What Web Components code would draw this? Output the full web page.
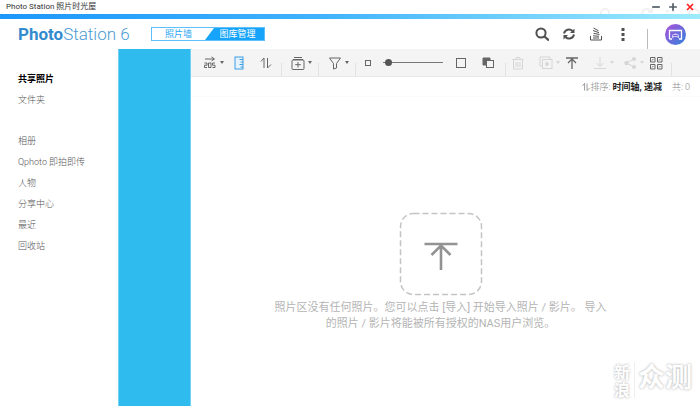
<!DOCTYPE html>
<html lang="zh-CN">
<head>
<meta charset="utf-8">
<title>Photo Station</title>
<style>
    body {
        margin: 0;
        background: #fff;
        color: #555;
        font-family: Roboto, "Noto Sans CJK SC", sans-serif;
        font-size: 9px;
    }
</style>
</head>
<body>
<photo-app></photo-app>

<script>
const icons = {
    search: `<circle cx="6" cy="6" r="4.6"/><path d="M9.5 9.5L14 13.5" stroke-width="2.2"/>`,
    refresh: `<path d="M2 6.5A5 5 0 0 1 10.5 4M12 7.5A5 5 0 0 1 3.500 10"/><path d="M12.500 1.500V6H8zM1.500 12.500V8H6z" fill="currentColor" stroke="none"/>`,
    tasks: `<path d="M1.500 9v4h11V9M4 11h6M4 8.800l6 .5M4.500 6.300l6 1.200M4 3.500l6 2.200M4.500 1l5 2.800"/>`,
    dots: `<path d="M5.500 1h3v3h-3zM5.500 6h3v3h-3zM5.500 11h3v3h-3z" fill="currentColor" stroke="none"/>`,
    timeline: `<path d="M2 3h9M8.500 1L11.500 3 8.500 5" /><path d="M1.500 7h2.500v2.200H1.500v2.300H4M5.500 7h2.500v4.500H5.500zM12 7H9.500v2.200H12v2.300H9.500"/>`,
    ruler: `<rect x="3" y="1" width="8" height="12" fill="#e6f3fc"/><path d="M11 3.500H7.500M11 6H8.500M11 8.500H7.500M11 11H8.500"/>`,
    sort: `<path d="M2 5.500L5 2v10M8.500 2v10l3.500-3.500"/>`,
    album: `<path d="M3 1.500h8M2 3.500h10"/><rect x="1" y="4" width="12" height="9.500" rx="1"/><path d="M7 6v5.500M4.200 8.700h5.600"/>`,
    filter: `<path d="M1.500 2h11L8.500 7.500v4.500l-3 1V7.500z"/>`,
    small: `<rect x="4.500" y="4.500" width="5" height="5"/>`,
    large: `<rect x="2.500" y="2.500" width="9" height="9"/>`,
    select: `<path d="M2 2h7v7H2z" fill="currentColor"/><rect x="5.500" y="4.500" width="7" height="7" fill="#f4f4f4"/>`,
    trash: `<path d="M1.500 3.500h11M5 3V1.500h4V3M2.500 4v9h9V4M5 6v5M7 6v5M9 6v5"/>`,
    copy: `<path d="M3 10H1V1h10v2"/><rect x="3.500" y="3.500" width="9.500" height="9"/><path d="M7 6v4l3-2z" fill="currentColor"/>`,
    upload: `<path d="M1 2h12M7 13V3M3 7l4-4 4 4" stroke-width="1.300"/>`,
    download: `<path d="M1 12.500h12M7 1v9M3.500 7L7 10.500 10.500 7"/>`,
    share: `<path d="M11 3L3.500 7l7.500 4"/><circle cx="3.500" cy="7" r="2.200" fill="currentColor" stroke="none"/><circle cx="11" cy="3" r="2" fill="currentColor" stroke="none"/><circle cx="11" cy="11" r="2" fill="currentColor" stroke="none"/>`,
    qr: `<path d="M1.500 1.500h4.500v4.500H1.500zM8.500 1.500H13v4.500H8.500zM1.500 8.500h4.500V13H1.500zM8.500 8.500H13V13H8.500zM3 4.500L4.500 3M10 4.500L11.500 3M3 11.500l1.500-1.500M10 11.500l1.500-1.500"/>`,
    minus: `<path d="M2.500 7h9"/>`,
    plus: `<path d="M2.500 7h9M7 2.500v9"/>`,
    close: `<path d="M3.500 3.500l7 7M10.500 3.500l-7 7"/>`
};

/* <icon-button icon label menu disabled> */
class IconButton extends HTMLElement {
    constructor() {
        super();
        this.attachShadow({mode: "open"});
    }

    connectedCallback() {
        this.shadowRoot.innerHTML = `
        <style>
        :host { display: block; flex: none; width: 24px; color: #666; }
        :host([menu]) { width: 30px; }
        :host([disabled]) { color: #d6d6d6; }
        button {
            display: flex;
            align-items: center;
            justify-content: center;
            gap: 3px;
            width: 100%;
            padding: 0;
            border: 0;
            background: none;
            color: inherit;
        }
        :host([menu]) button { justify-content: flex-end; }
        svg {
            flex: none;
            width: var(--icon-size, 14px);
            height: var(--icon-size, 14px);
            fill: none;
            stroke: currentColor;
            stroke-width: var(--icon-stroke, 1);
        }
        .caret { border: 2px solid transparent; border-top: 3px solid currentColor; border-bottom: 0; }
        </style>
        <button type="button" aria-label="${this.getAttribute("label")}" ${this.hasAttribute("disabled") ? "disabled" : ""}>
            <svg viewBox="0 0 14 14">${icons[this.getAttribute("icon")]}</svg>
            ${this.hasAttribute("menu") ? `<span class="caret"></span>` : ""}
        </button>
        `;
    }
}

/* Window title with the minimise, maximise and close controls */
class TitleBar extends HTMLElement {
    constructor() {
        super();
        this.attachShadow({mode: "open"});
        this.shadowRoot.innerHTML = `
        <style>
        :host {
            display: flex;
            align-items: center;
            height: 14px;
            padding: 0 2px 0 6px;
            border-bottom: 5px solid;
            border-image: linear-gradient(90deg, #1c97fb, #3fb2fd 45%, #9eebfc) 1;
            color: #333;
            font-size: 8px;
            line-height: 12px;
        }
        .name { flex: 1; }
        .ghost { width: 100px; height: 14px; margin-right: -53px; fill: none; stroke: #f1f1f1; stroke-width: 2; }
        icon-button { --icon-size: 12px; --icon-stroke: 2; width: 17px; color: #555e68; z-index: 1; }
        .close { color: #f22; }
        </style>
        <span class="name">Photo Station 照片时光屋</span>
        <svg class="ghost" viewBox="0 0 100 14"><circle cx="5" cy="13" r="4"/><path d="M42 14a5 5 0 0 1 9-3M52 8v4h-4M66 11h3M72 11h3"/><circle cx="94" cy="14" r="5"/></svg>
        <icon-button icon="minus" label="最小化"></icon-button>
        <icon-button icon="plus" label="最大化"></icon-button>
        <icon-button class="close" icon="close" label="关闭"></icon-button>
        `;
    }
}

class AppHeader extends HTMLElement {
    constructor() {
        super();
        this.attachShadow({mode: "open"});
        this.shadowRoot.innerHTML = `
        <style>
        :host {
            display: flex;
            align-items: center;
            height: 30px;
            padding: 0 14px 0 18px;
        }
        h1 {
            margin: 0;
            width: 133px;
            color: #4b9ad3;
            font-size: 17px;
            font-weight: 300;
            line-height: 30px;
            white-space: nowrap;
        }
        h1 b { color: #338bcd; font-weight: 700; }
        nav {
            display: flex;
            box-sizing: border-box;
            height: 14px;
            width: 114px;
            border: 1px solid #5cc0fb;
            line-height: 12px;
            text-align: center;
        }
        nav a { flex: 1; color: #27a5f5; text-decoration: none; }
        nav .active {
            padding-left: 6px;
            background: #16a4fb;
            color: #fff;
            clip-path: polygon(9px 0, 100% 0, 100% 100%, 0 100%);
        }
        .tools { display: flex; gap: 3px; margin-left: auto; }
        .tools icon-button { --icon-stroke: 2; color: #505050; }
        .tools .thin { --icon-stroke: 1; }
        .divider { align-self: flex-end; width: 1px; height: 20px; margin: 0 17px 0 12px; background: #bbb; }
        .user { padding: 0; border: 0; background: none; display: flex; }
        .user svg { width: 21px; height: 21px; }
        </style>
        <h1><b>Photo</b>Station 6</h1>
        <nav>
            <a href="#wall">照片墙</a>
            <a href="#library" class="active">图库管理</a>
        </nav>
        <div class="tools">
            <icon-button icon="search" label="搜索"></icon-button>
            <icon-button icon="refresh" label="刷新"></icon-button>
            <icon-button class="thin" icon="tasks" label="后台任务"></icon-button>
            <icon-button icon="dots" label="更多"></icon-button>
        </div>
        <span class="divider"></span>
        <button class="user" type="button" aria-label="用户">
            <svg viewBox="0 0 21 21">
                <defs><linearGradient id="g" x1="0" y1="0" x2="1" y2="1"><stop offset=".1" stop-color="#a455d8"/><stop offset="1" stop-color="#2e83dc"/></linearGradient></defs>
                <circle cx="10.500" cy="10.500" r="10.500" fill="url(#g)"/>
                <path d="M4.500 15V6.500h12V15h-2.500M4.500 15H7" fill="none" stroke="#fff" stroke-width="1.300"/>
                <path d="M7 14.500v-3.500q3.500-3 7 0v3.500l-2-1.500h-3z" fill="#d3c8f7"/>
                <path d="M8 11.500h5" stroke="#7067d8"/>
            </svg>
        </button>
        `;
    }
}

class SideMenu extends HTMLElement {
    constructor() {
        super();
        this.attachShadow({mode: "open"});
        this.shadowRoot.innerHTML = `
        <style>
        :host { display: block; flex: none; width: 100px; padding: 20px 0 0 18px; }
        ul { margin: 0 0 20px; padding: 0; list-style: none; line-height: 21px; }
        a { color: #555; font-weight: 300; text-decoration: none; }
        .current { color: #000; font-weight: 700; }
        </style>
        <ul>
            <li><a class="current" href="#shared">共享照片</a></li>
            <li><a href="#folders">文件夹</a></li>
        </ul>
        <ul>
            <li><a href="#albums">相册</a></li>
            <li><a href="#qphoto">Qphoto 即拍即传</a></li>
            <li><a href="#people">人物</a></li>
            <li><a href="#sharing">分享中心</a></li>
            <li><a href="#recent">最近</a></li>
            <li><a href="#recycle">回收站</a></li>
        </ul>
        `;
    }
}

class PhotoToolbar extends HTMLElement {
    constructor() {
        super();
        this.attachShadow({mode: "open"});
        this.shadowRoot.innerHTML = `
        <style>
        :host {
            display: flex;
            height: 27px;
            padding-left: 3px;
            border-bottom: 1px solid #e9e9e9;
            background: #f4f4f4;
        }
        .group {
            display: flex;
            align-items: center;
            gap: 3px;
            padding-right: 4px;
            background: linear-gradient(#e2e2e2, #e2e2e2) right bottom / 1px 13px no-repeat;
        }
        .single { padding-right: 7px; }
        .sizes { padding-right: 6px; }
        .packed { gap: 0; }
        .blue { color: #3c9ee5; }
        input {
            appearance: none;
            width: 60px;
            height: 8px;
            margin: 0 3px 0 0;
            background: linear-gradient(#777, #777) center / 100% 1px no-repeat;
        }
        input::-webkit-slider-thumb {
            appearance: none;
            width: 7px;
            height: 7px;
            border-radius: 50%;
            background: #555;
        }
        </style>
        <div class="group">
            <icon-button icon="timeline" label="时间轴" menu></icon-button>
            <icon-button class="blue" icon="ruler" label="标尺"></icon-button>
            <icon-button icon="sort" label="排序"></icon-button>
        </div>
        <div class="group single"><icon-button icon="album" label="新建相册" menu></icon-button></div>
        <div class="group single"><icon-button icon="filter" label="筛选" menu></icon-button></div>
        <div class="group sizes">
            <icon-button icon="small" label="缩小"></icon-button>
            <input type="range" min="0" max="100" value="4" aria-label="缩略图大小">
            <icon-button icon="large" label="放大"></icon-button>
            <icon-button icon="select" label="选择"></icon-button>
        </div>
        <div class="group packed">
            <icon-button icon="trash" label="删除" disabled></icon-button>
            <icon-button icon="copy" label="复制" menu disabled></icon-button>
            <icon-button icon="upload" label="导入"></icon-button>
            <icon-button icon="download" label="下载" menu disabled></icon-button>
            <icon-button icon="share" label="分享" menu disabled></icon-button>
            <icon-button icon="qr" label="二维码"></icon-button>
        </div>
        `;
    }
}

/* Current sort order and the number of photos */
class SortStatus extends HTMLElement {
    constructor() {
        super();
        this.attachShadow({mode: "open"});
        this.shadowRoot.innerHTML = `
        <style>
        :host {
            display: flex;
            justify-content: flex-end;
            align-items: center;
            height: 19px;
            padding-right: 10px;
            border-bottom: 1px solid #fafafa;
            color: #888;
            font-weight: 300;
        }
        svg { width: 10px; height: 10px; fill: none; stroke: #777; }
        b { margin: 0 10px 0 2px; color: #222; font-weight: 700; }
        </style>
        <svg viewBox="0 0 14 14">${icons.sort}</svg>
        <span>排序:</span><b>时间轴, 递减</b><span>共: 0</span>
        `;
    }
}

class EmptyDrop extends HTMLElement {
    constructor() {
        super();
        this.attachShadow({mode: "open"});
        this.shadowRoot.innerHTML = `
        <style>
        :host {
            display: flex;
            flex-direction: column;
            align-items: center;
            padding: 115px 10px 0 0;
            color: #b4b4b4;
            font-size: 11px;
            line-height: 16px;
            text-align: center;
        }
        button { display: flex; padding: 0; border: 0; background: none; }
        svg { width: 84px; height: 84px; fill: none; }
        p { max-width: 340px; margin: 4px 0 0; }
        </style>
        <button type="button" aria-label="导入照片">
            <svg viewBox="0 0 84 84">
                <rect x="1.500" y="1.500" width="81" height="81" rx="13" stroke="#c4c4c4" stroke-width="1.500" stroke-dasharray="6 3"/>
                <path d="M25.500 32h33M42 58V34M32.500 43l9.500-9.500 9.500 9.500" stroke="#939393" stroke-width="2.600"/>
            </svg>
        </button>
        <p><slot></slot></p>
        `;
    }
}

class WaterMark extends HTMLElement {
    constructor() {
        super();
        this.attachShadow({mode: "open"});
        this.shadowRoot.innerHTML = `
        <style>
        :host {
            position: absolute;
            right: 8px;
            bottom: 8px;
            display: flex;
            gap: 3px;
            color: #fff;
            font-family: "Noto Sans CJK SC", sans-serif;
            text-shadow: 0 0 3px #bbb, 0 0 2px #ddd;
        }
        .small { width: 17px; font-size: 16px; line-height: 18px; font-weight: 700; }
        .line { width: 1px; background: #eee; }
        .big { font-size: 27px; line-height: 28px; font-weight: 700; }
        </style>
        <span class="small">新浪</span><span class="line"></span><span class="big">众测</span>
        `;
    }
}

class PhotoApp extends HTMLElement {
    constructor() {
        super();
        this.attachShadow({mode: "open"});
        this.shadowRoot.innerHTML = `
        <style>
        :host { position: relative; display: flex; flex-direction: column; min-height: 100vh; overflow: hidden; }
        .body { display: flex; flex: 1; }
        .panel {
            flex: none;
            box-sizing: border-box;
            width: 73px;
            border: 1px solid #72d2f5;
            border-width: 0 1px;
            background: #2fbbed;
        }
        main { flex: 1; min-width: 0; }
        </style>
        <title-bar></title-bar>
        <app-header></app-header>
        <div class="body">
            <side-menu></side-menu>
            <div class="panel"></div>
            <main>
                <photo-toolbar></photo-toolbar>
                <sort-status></sort-status>
                <empty-drop>照片区没有任何照片。您可以点击 [导入] 开始导入照片 / 影片。 导入的照片 / 影片将能被所有授权的NAS用户浏览。</empty-drop>
            </main>
        </div>
        <water-mark></water-mark>
        `;
    }
}

customElements.define("icon-button", IconButton);
customElements.define("title-bar", TitleBar);
customElements.define("app-header", AppHeader);
customElements.define("side-menu", SideMenu);
customElements.define("photo-toolbar", PhotoToolbar);
customElements.define("sort-status", SortStatus);
customElements.define("empty-drop", EmptyDrop);
customElements.define("water-mark", WaterMark);
customElements.define("photo-app", PhotoApp);
</script>
</body>
</html>
